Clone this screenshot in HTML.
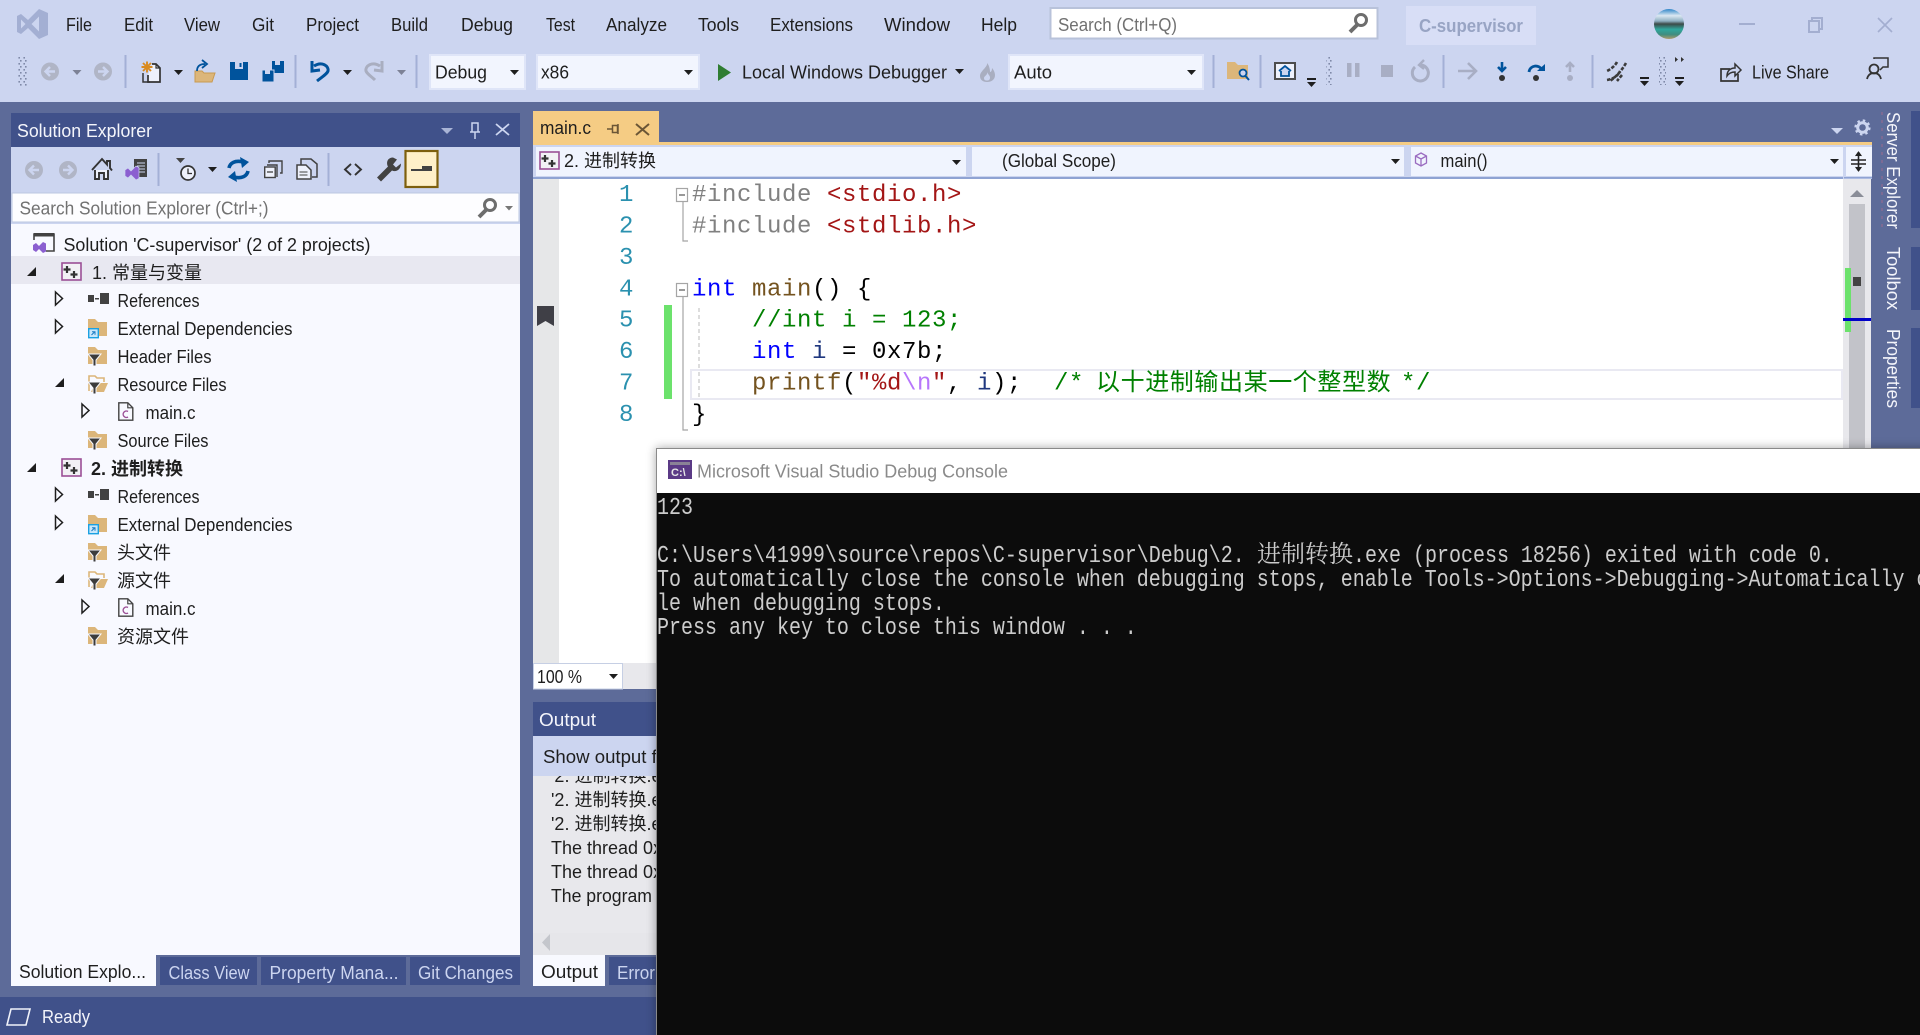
<!DOCTYPE html>
<html lang="en">
<head>
<meta charset="utf-8">
<title>C-supervisor - Microsoft Visual Studio</title>
<style>
html,body{margin:0;padding:0;background:#5d6b99;overflow:hidden}
svg{display:block}
text{font-family:"Liberation Sans","Noto Sans CJK SC",sans-serif;font-size:18px;fill:#1e1e1e;white-space:pre}
.w{fill:#f4f5fb}
.l{fill:#ccd5f0}
.g{fill:#717171}
.m text,text.m,.m{font-family:"Liberation Mono","Noto Sans CJK SC",monospace;font-size:24px;letter-spacing:.6px}
.n{fill:#2b91af}
.c{fill:#008000}
.k{fill:#0000ff}
.f{fill:#74531f}
.s{fill:#a31515}
.v{fill:#1f377f}
.p{fill:#808080}
.b{fill:#000}
.con{font-family:"Liberation Mono",monospace;font-size:20px;fill:#cccccc}
.cjk{font-family:"Noto Sans CJK SC",sans-serif;font-size:24px}
.ccjk{font-family:"Noto Serif CJK SC","Noto Sans CJK SC",serif;font-size:24px;fill:#cccccc}
.sep{fill:#a3b0d6}
.cb{fill:#f2f5fe;stroke:#dfe5f8;stroke-width:2}
</style>
</head>
<body>
<svg xmlns="http://www.w3.org/2000/svg" width="1920" height="1035" viewBox="0 0 1920 1035">
<defs>
<pattern id="grip" width="5" height="6" patternUnits="userSpaceOnUse"><rect width="5" height="6" fill="none"/><rect x="0" y="0" width="1.6" height="1.6" fill="#7f89a8"/><rect x="3.4" y="3" width="1.6" height="1.6" fill="#7f89a8"/></pattern>
<linearGradient id="av" x1="0" y1="0" x2="0" y2="1"><stop offset="0" stop-color="#2f86c8"/><stop offset=".22" stop-color="#dbe8f2"/><stop offset=".4" stop-color="#8fb0c2"/><stop offset=".5" stop-color="#3c4a48"/><stop offset=".68" stop-color="#2fa79d"/><stop offset=".85" stop-color="#3f8d80"/><stop offset="1" stop-color="#b09a6a"/></linearGradient>
<filter id="sh" x="-5%" y="-5%" width="110%" height="110%"><feGaussianBlur stdDeviation="5"/></filter>
<g id="caret"><path d="M0 0h9l-4.500 5z" fill="#1e1e1e"/></g>
<g id="gcaret"><path d="M0 0h9l-4.500 5z" fill="#7d8296"/></g>
<g id="bcaret"><rect x="0" y="0" width="9" height="2" fill="#1e1e1e"/><path d="M0 4h9l-4.500 5z" fill="#1e1e1e"/></g>
<g id="oc"><path d="M0 0l7 6.500-7 6.500z" fill="#f8f9ff" stroke="#1e1e1e" stroke-width="1.500"/></g>
<g id="ec"><path d="M9 0v9h-9z" fill="#1e1e1e"/></g>
<g id="proj"><rect x="1" y="1" width="19" height="17" fill="#f2f1f5" stroke="#9b4f96" stroke-width="1.600"/><path d="M6 4v7M2.500 7.500h7" stroke="#333" stroke-width="2.200"/><path d="M13 9v7M9.500 12.500h7" stroke="#333" stroke-width="2.200"/></g>
<g id="ref"><rect x="0" y="2" width="6" height="7" fill="#424242"/><rect x="7" y="5" width="4" height="1.500" fill="#424242"/><rect x="12" y="0" width="9" height="11" fill="#424242"/></g>
<g id="fold"><path d="M0 1h7l3 3h9v14H0z" fill="#dcb67a"/></g>
<g id="ext"><use href="#fold"/><rect x="0" y="10" width="11" height="10" fill="#f8f9ff"/><rect x=".7" y="10.700" width="9.600" height="9" fill="#c9e7fb" stroke="#1ba1e2" stroke-width="1.400"/><path d="M3.500 17l3-3M4 13.800h3v3" stroke="#1b7cc4" stroke-width="1" fill="none"/></g>
<g id="funnel"><path d="M0 8h13l-5 6v6h-3v-6z" fill="#3c3c3c" stroke="#f8f9ff" stroke-width="1"/></g>
<g id="ff"><use href="#fold"/><use href="#funnel"/></g>
<g id="off"><path d="M1 17V2h6l2 2h7v4" fill="#f8f9ff" stroke="#dcb67a" stroke-width="1.600"/><path d="M3 18l4-9h13l-4 9z" fill="#dcb67a"/><use href="#funnel"/></g>
<g id="cfile"><path d="M.8.800h9l5 5v12.400H.8z" fill="#f8f9ff" stroke="#424242" stroke-width="1.400"/><path d="M9.800.800v5h5" fill="none" stroke="#424242" stroke-width="1.200"/><path d="M10 9.500a3.200 3.200 0 1 0 0 5.500" fill="none" stroke="#9b4f96" stroke-width="1.400"/></g>
<g id="circL"><circle cx="9" cy="9" r="9" fill="#b0b5c6"/><path d="M14 9H5M9 4.500L4.500 9l4.500 4.500" fill="none" stroke="#ccd5f0" stroke-width="2.400"/></g>
<g id="circR"><circle cx="9" cy="9" r="9" fill="#b0b5c6"/><path d="M4 9h9M9 4.500L13.500 9 9 13.500" fill="none" stroke="#ccd5f0" stroke-width="2.400"/></g>
</defs>

<!-- chrome -->
<rect width="1920" height="1035" fill="#5d6b99"/>
<rect width="1920" height="102" fill="#ccd5f0"/>

<!-- logo -->
<path fill-rule="evenodd" fill="#a3afd3" d="M39 9l9 4v22l-9 4-11-11-7 6-4-2V16l4-2 7 6zM21 19.500v9l4.500-4.500zM39 16.500L31.500 24l7.500 7.500z"/>

<!-- menu -->
<text x="66" y="31" textLength="26" lengthAdjust="spacingAndGlyphs">File</text>
<text x="124" y="31" textLength="29" lengthAdjust="spacingAndGlyphs">Edit</text>
<text x="184" y="31" textLength="36" lengthAdjust="spacingAndGlyphs">View</text>
<text x="252" y="31" textLength="22" lengthAdjust="spacingAndGlyphs">Git</text>
<text x="306" y="31" textLength="53" lengthAdjust="spacingAndGlyphs">Project</text>
<text x="391" y="31" textLength="37" lengthAdjust="spacingAndGlyphs">Build</text>
<text x="461" y="31" textLength="52" lengthAdjust="spacingAndGlyphs">Debug</text>
<text x="546" y="31" textLength="29" lengthAdjust="spacingAndGlyphs">Test</text>
<text x="606" y="31" textLength="61" lengthAdjust="spacingAndGlyphs">Analyze</text>
<text x="698" y="31" textLength="41" lengthAdjust="spacingAndGlyphs">Tools</text>
<text x="770" y="31" textLength="83" lengthAdjust="spacingAndGlyphs">Extensions</text>
<text x="884" y="31" textLength="66" lengthAdjust="spacingAndGlyphs">Window</text>
<text x="981" y="31" textLength="36" lengthAdjust="spacingAndGlyphs">Help</text>

<rect x="1050.500" y="8" width="327" height="30.500" fill="#fff" stroke="#b8c2da" stroke-width="2"/>
<text x="1058" y="31" textLength="119" lengthAdjust="spacingAndGlyphs" class="g">Search (Ctrl+Q)</text>
<circle cx="1361" cy="20" r="5.500" fill="none" stroke="#6d6d6d" stroke-width="3"/><path d="M1357 25l-7 7" stroke="#6d6d6d" stroke-width="4"/>
<rect x="1406" y="6" width="130" height="39" fill="#d8def6"/>
<text x="1419" y="32" textLength="104" lengthAdjust="spacingAndGlyphs" style="fill:#98a4c4;font-weight:bold">C-supervisor</text>
<circle cx="1669" cy="24" r="15" fill="url(#av)"/>
<rect x="1739" y="23" width="16" height="2" fill="#a3aed0"/>
<path d="M1812 21v-3h10v11h-3M1809 21h10v11h-10z" fill="none" stroke="#a3aed0" stroke-width="2"/>
<path d="M1878 18l14 14M1892 18l-14 14" stroke="#a3aed0" stroke-width="1.600"/>

<!-- toolbar -->
<rect x="18" y="56" width="10" height="30" fill="url(#grip)"/>
<use href="#circL" x="41" y="62.500"/><use href="#gcaret" x="72.500" y="70"/><use href="#circR" x="94" y="62.500"/>
<rect x="124.500" y="55" width="2" height="33" class="sep"/>
<path d="M152 64h4l4 4v14h-12v-7" fill="#eef1fb" stroke="#333" stroke-width="1.700"/><path d="M143 73v9h7" fill="none" stroke="#333" stroke-width="1.500"/><path d="M156 64v4h4" fill="none" stroke="#333" stroke-width="1.200"/>
<path d="M147 61.500v11M141.500 67h11M143 63l8 8M151 63l-8 8" stroke="#d98a1f" stroke-width="1.900"/>
<use href="#caret" x="174" y="70"/>
<path d="M195 82V71h7l2 2h11l-3 9z" fill="#dcb67a" stroke="#c99a50" stroke-width="1"/>
<path d="M197 71c0-5 3-7 8-7" fill="none" stroke="#00539c" stroke-width="1.800"/><path d="M202 60l5 4-5 4" fill="none" stroke="#00539c" stroke-width="1.800"/>
<path d="M230 62h18v18h-18z" fill="#00539c"/><rect x="235" y="62" width="8" height="7" fill="#ccd5f0"/><rect x="239.500" y="63" width="2" height="4" fill="#00539c"/>
<path d="M272 61h12v12h-12z" fill="#00539c"/><rect x="275" y="61" width="5" height="4" fill="#ccd5f0"/>
<path d="M262 70h12v12h-12z" fill="#00539c" stroke="#ccd5f0" stroke-width="1"/><rect x="265" y="70" width="5" height="4" fill="#ccd5f0"/>
<rect x="294.500" y="55" width="2" height="33" class="sep"/>
<path d="M312 61v10l8-1" fill="none" stroke="#00539c" stroke-width="3"/><path d="M314 66c8-5 15 0 14 5-1 3-6 6-11 10" fill="none" stroke="#00539c" stroke-width="3"/>
<use href="#caret" x="343" y="70"/>
<path d="M382 61v10l-8-1" fill="none" stroke="#a9aec0" stroke-width="3"/><path d="M380 66c-8-5-15 0-14 5 1 3 6 6 9 9" fill="none" stroke="#a9aec0" stroke-width="3"/>
<use href="#gcaret" x="397" y="70"/>
<rect x="415.500" y="55" width="2" height="33" class="sep"/>
<rect x="430" y="55" width="95" height="34" class="cb"/>
<text x="435" y="78.500" textLength="52" lengthAdjust="spacingAndGlyphs">Debug</text><use href="#caret" x="510" y="70"/>
<rect x="537" y="55" width="162" height="34" class="cb"/>
<text x="541" y="78.500" textLength="28" lengthAdjust="spacingAndGlyphs">x86</text><use href="#caret" x="684" y="70"/>
<path d="M718 64l13 8.500-13 8.500z" fill="#2f7d32"/>
<text x="742" y="78.500" textLength="205" lengthAdjust="spacingAndGlyphs">Local Windows Debugger</text><use href="#caret" x="955" y="69"/>
<path fill-rule="evenodd" d="M987 63c1 4-7 8-7 13 0 4 3 6 7 6s8-2 8-7c0-3-2-6-3-7 0 3-1 4-2 4 0-3-1-7-3-9zM987 72c1 3-3 4-3 6 0 2 1 2.500 3 2.500s3-1 3-3c0-2-2-3-3-5.500z" fill="#a9aec0"/>
<rect x="1009" y="55" width="194" height="34" class="cb"/>
<text x="1014" y="78.500" textLength="38" lengthAdjust="spacingAndGlyphs">Auto</text><use href="#caret" x="1187" y="70"/>
<rect x="1212.500" y="55" width="2" height="33" class="sep"/>
<path d="M1227 62h8l3 3h10v14h-21z" fill="#dcb67a"/><circle cx="1243" cy="73" r="3.500" fill="#ccd5f0" stroke="#00539c" stroke-width="1.800"/><path d="M1245.500 76l3.500 4" stroke="#00539c" stroke-width="2"/>
<rect x="1259.500" y="55" width="2" height="33" class="sep"/>
<rect x="1275" y="63" width="20" height="16" fill="#eef1fb" stroke="#4d4d4d" stroke-width="2"/><path d="M1279 71l6-5 6 5M1281 71v5h8v-5" fill="#ccd5f0" stroke="#00539c" stroke-width="1.800"/>
<use href="#bcaret" x="1307" y="78"/>
<rect x="1326" y="56" width="7" height="29" fill="url(#grip)"/>
<rect x="1347" y="63" width="4.500" height="14" fill="#a8aec4"/><rect x="1355" y="63" width="4.500" height="14" fill="#a8aec4"/>
<rect x="1381" y="65" width="12" height="12" fill="#a8aec4"/>
<path d="M1415 67a8 8 0 1 0 6-2" fill="none" stroke="#a8aec4" stroke-width="3"/><path d="M1424 60l-5 5 5 4" fill="none" stroke="#a8aec4" stroke-width="2.400"/>
<rect x="1442.500" y="55" width="2" height="33" class="sep"/>
<path d="M1458 71h18M1468 63l8 8-8 8" fill="none" stroke="#a8aec4" stroke-width="2.600"/>
<path d="M1502 62v9M1498 67l4 4 4-4" fill="none" stroke="#00539c" stroke-width="2.600"/><circle cx="1502" cy="78" r="3" fill="#333"/>
<path d="M1529 72c1-7 10-8 13-2" fill="none" stroke="#00539c" stroke-width="2.800"/><path d="M1537 71h8v-7z" fill="#00539c"/><circle cx="1536" cy="78" r="3" fill="#333"/>
<path d="M1570 72v-9M1566 67l4-4 4 4" fill="none" stroke="#a8aec4" stroke-width="2.600"/><circle cx="1570" cy="78" r="3" fill="#a8aec4"/>
<rect x="1591.500" y="55" width="2" height="33" class="sep"/>
<path d="M1617 62c-2 4-6 7-10 9M1626 63c-4 7-9 13-16 18M1607 80c6-1 11-4 13-9M1622 75l-5 6" fill="none" stroke="#3c3c3c" stroke-width="2.600" stroke-dasharray="3.500 1.500"/>
<use href="#bcaret" x="1640" y="77"/>
<rect x="1659" y="56" width="7" height="29" fill="url(#grip)"/>
<path d="M1675 57l3 2.500-3 2.500zM1681 57l3 2.500-3 2.500z" fill="#333"/>
<use href="#bcaret" x="1675" y="77"/>
<path d="M1730 69h-9v12h17v-7" fill="none" stroke="#333" stroke-width="1.700"/><path d="M1727 76c0-5 3-8 8-8v-4l6 6-6 6v-4c-3 0-6 1-8 4z" fill="#ccd5f0" stroke="#333" stroke-width="1.500"/>
<text x="1752" y="78.500" textLength="77" lengthAdjust="spacingAndGlyphs">Live Share</text>
<circle cx="1874" cy="69" r="4.500" fill="none" stroke="#333" stroke-width="1.800"/><path d="M1867 79c1-4 3-6 7-6s6 2 7 6" fill="none" stroke="#333" stroke-width="1.800"/><path d="M1874 59v-1h14v9h-5l-3 3" fill="none" stroke="#333" stroke-width="1.500"/>

<!-- solution explorer -->
<rect x="11" y="113" width="509" height="34" fill="#40518a"/>
<text x="17" y="137" textLength="135" lengthAdjust="spacingAndGlyphs" class="w">Solution Explorer</text>
<path d="M441 128h12l-6 6z" fill="#a9b4d6"/>
<path d="M472 123h6v9h-6zM470 132h10M475 132v7" fill="none" stroke="#ccd5f0" stroke-width="1.500"/>
<path d="M496 124l13 11M509 124l-13 11" stroke="#ccd5f0" stroke-width="1.800"/>
<rect x="11" y="147" width="509" height="44" fill="#ccd5f0"/>
<use href="#circL" x="25" y="161"/><use href="#circR" x="59" y="161"/>
<path d="M92 170l10-11 5 5.500v-3.500h3v7l2 2.500" fill="none" stroke="#333" stroke-width="1.900"/><path d="M95 170v9h4v-6h5v6h4v-9" fill="#eef1fb" stroke="#333" stroke-width="1.900"/>
<rect x="134" y="159" width="13" height="18" fill="#424242"/><path d="M137 163h8M137 166h8M137 169h8M137 172h8" stroke="#ccd5f0" stroke-width="1"/>
<path d="M125 170l3-2 3 3 5-5 3 1.500v11l-3 1.500-5-5-3 3-3-2z" fill="#8b5fd0" stroke="#ccd5f0" stroke-width=".7"/>
<rect x="157.500" y="153" width="2" height="33" class="sep"/>
<path d="M176 158h9l-4.500 5z" fill="#444"/><circle cx="188" cy="173" r="7" fill="#eef1fb" stroke="#333" stroke-width="1.700"/><path d="M188 168.500v5h4" fill="none" stroke="#333" stroke-width="1.300"/>
<use href="#caret" x="208" y="167"/>
<path d="M229 168c1-5 6-8 14-6" fill="none" stroke="#00539c" stroke-width="3.600"/><path d="M240 157l9 5-7 6z" fill="#00539c"/><path d="M248 171c-1 5-6 8-14 6" fill="none" stroke="#00539c" stroke-width="3.600"/><path d="M237 182l-9-5 7-6z" fill="#00539c"/>
<path d="M269 163v-2h13v12h-2" fill="none" stroke="#424242" stroke-width="1.400"/><path d="M267 165h10v12" fill="none" stroke="#424242" stroke-width="1.400"/><rect x="264.700" y="167" width="10.500" height="10.500" fill="#eef1fb" stroke="#424242" stroke-width="1.400"/><path d="M267 172h6" stroke="#424242" stroke-width="1.300"/>
<path d="M301 168v-9h10l6 5v13h-5" fill="none" stroke="#424242" stroke-width="1.500"/><path d="M297 165h9l5 5v9h-14z" fill="#eef1fb" stroke="#424242" stroke-width="1.500"/><path d="M299.500 172h8M299.500 175h8" stroke="#424242" stroke-width="1.100"/>
<rect x="327.500" y="153" width="2" height="33" class="sep"/>
<path d="M351 164l-6 5.500 6 5.500M355 164l6 5.500-6 5.500" fill="none" stroke="#333" stroke-width="1.900"/>
<path d="M394 158c-6 0-7 6-5 9l-11 11 4 4 11-11c4 2 9-1 9-7l-5 4-3-3 4-5z" fill="#424242" transform="translate(-1 -.500)"/>
<rect x="405.500" y="151" width="32" height="36" fill="#fff0c8" stroke="#7d5f0d" stroke-width="2.200"/><path d="M411 171h21v-5h-10v3h-11z" fill="#424242"/>
<rect x="11" y="191" width="509" height="33" fill="#ccd5f0"/>
<rect x="12" y="193" width="507" height="29" fill="#fdfdff" stroke="#bcc6e0" stroke-width="1"/>
<text x="19.500" y="214.500" textLength="249" lengthAdjust="spacingAndGlyphs" class="g">Search Solution Explorer (Ctrl+;)</text>
<circle cx="490" cy="205" r="5.500" fill="none" stroke="#6d6d6d" stroke-width="3"/><path d="M486 210l-7 7" stroke="#6d6d6d" stroke-width="4"/>
<path d="M505 206h8l-4 4.500z" fill="#777"/>
<rect x="11" y="224" width="509" height="731" fill="#f8f9ff"/>
<rect x="11" y="256" width="509" height="28" fill="#e8e8f1"/>

<!-- tree -->
<path d="M34 240v-6h20v17h-8" fill="none" stroke="#424242" stroke-width="1.600"/><rect x="34" y="233" width="20" height="3.500" fill="#424242"/>
<path d="M33 245l3-2 3 3 4-4 3 1.500v8l-3 1.500-4-4-3 3-3-2z" fill="#8b5fd0"/>
<text x="63.500" y="251" textLength="307" lengthAdjust="spacingAndGlyphs">Solution 'C-supervisor' (2 of 2 projects)</text>
<use href="#ec" x="27" y="267"/><use href="#proj" x="61" y="262"/>
<text x="92" y="279">1. 常量与变量</text>
<use href="#oc" x="55.500" y="292"/><use href="#ref" x="88" y="293"/><text x="117.500" y="307" textLength="82" lengthAdjust="spacingAndGlyphs">References</text>
<use href="#oc" x="55.500" y="320"/><use href="#ext" x="88" y="318"/><text x="117.500" y="335" textLength="175" lengthAdjust="spacingAndGlyphs">External Dependencies</text>
<use href="#ff" x="88" y="346"/><text x="117.500" y="363" textLength="94" lengthAdjust="spacingAndGlyphs">Header Files</text>
<use href="#ec" x="55" y="378"/><use href="#off" x="88" y="374"/><text x="117.500" y="391" textLength="109" lengthAdjust="spacingAndGlyphs">Resource Files</text>
<use href="#oc" x="82" y="404"/><use href="#cfile" x="118" y="402"/><text x="145.500" y="419" textLength="50" lengthAdjust="spacingAndGlyphs">main.c</text>
<use href="#ff" x="88" y="430"/><text x="117.500" y="447" textLength="91" lengthAdjust="spacingAndGlyphs">Source Files</text>
<use href="#ec" x="27" y="463"/><use href="#proj" x="61" y="458"/>
<text x="91" y="475" style="font-weight:bold">2. 进制转换</text>
<use href="#oc" x="55.500" y="488"/><use href="#ref" x="88" y="489"/><text x="117.500" y="503" textLength="82" lengthAdjust="spacingAndGlyphs">References</text>
<use href="#oc" x="55.500" y="516"/><use href="#ext" x="88" y="514"/><text x="117.500" y="531" textLength="175" lengthAdjust="spacingAndGlyphs">External Dependencies</text>
<use href="#ff" x="88" y="542"/><text x="117" y="559">头文件</text>
<use href="#ec" x="55" y="574"/><use href="#off" x="88" y="570"/><text x="117" y="587">源文件</text>
<use href="#oc" x="82" y="600"/><use href="#cfile" x="118" y="598"/><text x="145.500" y="615" textLength="50" lengthAdjust="spacingAndGlyphs">main.c</text>
<use href="#ff" x="88" y="626"/><text x="117" y="643">资源文件</text>

<!-- left tabs -->
<rect x="11" y="955" width="145" height="31" fill="#f8f9ff"/>
<text x="19" y="978" textLength="127" lengthAdjust="spacingAndGlyphs">Solution Explo...</text>
<rect x="160" y="957" width="97" height="28" fill="#40518a"/><text x="168.500" y="979" textLength="81" lengthAdjust="spacingAndGlyphs" class="l">Class View</text>
<rect x="261" y="957" width="145" height="28" fill="#40518a"/><text x="269.500" y="979" textLength="129" lengthAdjust="spacingAndGlyphs" class="l">Property Mana...</text>
<rect x="410" y="957" width="110" height="28" fill="#40518a"/><text x="418" y="979" textLength="95" lengthAdjust="spacingAndGlyphs" class="l">Git Changes</text>

<!-- editor tabs -->
<rect x="533" y="111" width="126" height="31" fill="#f5cc84"/>
<rect x="533" y="142" width="1339" height="3" fill="#f5cc84"/>
<text x="540" y="134" textLength="51" lengthAdjust="spacingAndGlyphs">main.c</text>
<path d="M607 129h5M612.500 125.500h5v7h-5zM618 124v10" fill="none" stroke="#6b5636" stroke-width="1.500"/>
<path d="M636 124l13 11M649 124l-13 11" stroke="#6b5636" stroke-width="2"/>
<path d="M1831 128h12l-6 6z" fill="#ccd5f0"/>
<circle cx="1862.500" cy="127.500" r="4.800" fill="none" stroke="#ccd5f0" stroke-width="3"/><circle cx="1862.500" cy="127.500" r="7" fill="none" stroke="#ccd5f0" stroke-width="2.200" stroke-dasharray="2.500 3"/>

<!-- nav bar -->
<rect x="533" y="145" width="1339" height="34" fill="#ccd5f0"/>
<rect x="536" y="147" width="430" height="29" fill="#f0f4fe"/><rect x="972" y="147" width="432" height="29" fill="#f0f4fe"/><rect x="1411" y="147" width="432" height="29" fill="#f0f4fe"/><rect x="1846" y="147" width="26" height="29" fill="#f0f4fe"/>
<rect x="533" y="177" width="1310" height="2.500" fill="#8fa3d3"/><rect x="1844" y="177" width="28" height="1.500" fill="#8fa3d3"/>
<use href="#proj" x="539" y="151"/>
<text x="564" y="167">2. 进制转换</text>
<use href="#caret" x="952" y="160"/>
<text x="1002" y="167" textLength="114" lengthAdjust="spacingAndGlyphs">(Global Scope)</text><use href="#caret" x="1391" y="159"/>
<path d="M1421 153l5.500 3v7l-5.500 3-5.500-3v-7zM1415.500 156l5.500 3 5.500-3M1421 159v7" fill="none" stroke="#9a6cc0" stroke-width="1.300"/>
<text x="1440.500" y="167" textLength="47" lengthAdjust="spacingAndGlyphs">main()</text><use href="#caret" x="1830" y="159"/>
<path d="M1851 160h15M1851 164h15M1858.500 152v19" stroke="#222" stroke-width="1.600"/><path d="M1855.500 156l3-4 3 4M1855.500 167l3 4 3-4" fill="#222" stroke="#222" stroke-width="1"/>

<!-- editor -->
<rect x="533" y="179" width="26" height="484" fill="#e6e7e8"/>
<rect x="559" y="179" width="1284" height="484" fill="#fff"/>
<rect x="1843" y="179" width="28" height="276" fill="#e8e8ec"/>
<path d="M1850 197l7-7 7 7z" fill="#8a8d98"/>
<rect x="1849" y="204" width="16" height="250" fill="#c2c3c9"/>
<rect x="1845" y="268" width="6" height="64" fill="#6ce26c"/>
<rect x="1853" y="277" width="8" height="9" fill="#424242"/>
<rect x="1843" y="318" width="28" height="3" fill="#0000c8"/>
<path d="M537 306h17v20l-8.500-5-8.500 5z" fill="#3f3f46"/>
<rect x="664" y="305" width="8" height="94" fill="#6ce26c"/>
<rect x="691" y="370" width="1151" height="29" fill="none" stroke="#e9e9f2" stroke-width="2"/>
<g fill="none" stroke="#a5a5a5" stroke-width="1.200"><rect x="676.500" y="188.500" width="11" height="13" fill="#fff"/><path d="M679 195h6" stroke="#555"/><path d="M683 202v39h5"/><rect x="676.500" y="283.500" width="11" height="13" fill="#fff"/><path d="M679 290h6" stroke="#555"/><path d="M683 297v133h5"/></g>
<path d="M699 308v62" stroke="#bbb" stroke-width="1" stroke-dasharray="4 3"/><path d="M699 372v26" stroke="#bbb" stroke-width="1" stroke-dasharray="4 3"/>

<g class="m">
<text class="m n" x="619" y="201">1</text>
<text class="m n" x="619" y="232.400">2</text>
<text class="m n" x="619" y="263.900">3</text>
<text class="m n" x="619" y="295.300">4</text>
<text class="m n" x="619" y="326.700">5</text>
<text class="m n" x="619" y="358.100">6</text>
<text class="m n" x="619" y="389.600">7</text>
<text class="m n" x="619" y="421">8</text>

<text class="m p" x="692" y="201">#include</text><text class="m s" x="827" y="201">&lt;stdio.h&gt;</text>
<text class="m p" x="692" y="232.400">#include</text><text class="m s" x="827" y="232.400">&lt;stdlib.h&gt;</text>
<text class="m k" x="692" y="295.300">int</text><text class="m f" x="752" y="295.300">main</text><text class="m b" x="812" y="295.300">()</text><text class="m b" x="857" y="295.300">{</text>
<text class="m c" x="752" y="326.700">//int i = 123;</text>
<text class="m k" x="752" y="358.100">int</text><text class="m v" x="812" y="358.100">i</text><text class="m b" x="842" y="358.100">= 0x7b;</text>
<text class="m f" x="752" y="389.600">printf</text><text class="m b" x="842" y="389.600">(</text><text class="m s" x="857" y="389.600">"%d</text><text class="m" style="fill:#b776fb" x="902" y="389.600">\n</text><text class="m s" x="932" y="389.600">"</text><text class="m b" x="947" y="389.600">,</text><text class="m v" x="977" y="389.600">i</text><text class="m b" x="992" y="389.600">);</text>
<text class="m c" x="1054" y="389.600">/*</text><text class="cjk c" x="1096" y="390">以十进制输出某一个整型数</text><text class="m c" x="1401" y="389.600">*/</text>
<text class="m b" x="692" y="421">}</text>
</g>

<!-- zoom bar -->
<rect x="533" y="663" width="130" height="26" fill="#e8e8ec"/>
<rect x="533.500" y="663.500" width="89" height="25.500" fill="#fff" stroke="#c6cfe4" stroke-width="1"/>
<text x="537" y="683" textLength="45" lengthAdjust="spacingAndGlyphs">100 %</text><use href="#caret" x="609" y="674"/>

<!-- output -->
<rect x="533" y="702" width="130" height="34" fill="#40518a"/>
<text x="539" y="726" textLength="57" lengthAdjust="spacingAndGlyphs" class="w">Output</text>
<rect x="533" y="736" width="130" height="40" fill="#ccd5f0"/>
<rect x="533" y="776" width="130" height="179" fill="#e8e8ec"/>
<svg x="533" y="776" width="130" height="179" viewBox="533 776 130 179">
<text x="551" y="782">'2. 进制转换.exe'</text>
<text x="551" y="806">'2. 进制转换.exe'</text>
<text x="551" y="830">'2. 进制转换.exe'</text>
<text x="551" y="854">The thread 0x</text>
<text x="551" y="878">The thread 0x</text>
<text x="551" y="902" textLength="101" lengthAdjust="spacingAndGlyphs">The program</text>
<rect x="533" y="933" width="130" height="22" fill="#e6e6ea"/>
<path d="M550 934v17l-8-8.500z" fill="#c4c6cc"/>
</svg>
<text x="543" y="763" textLength="120" lengthAdjust="spacingAndGlyphs">Show output fr</text>
<rect x="533" y="955" width="72" height="31" fill="#f8f9ff"/><text x="541" y="978" textLength="57" lengthAdjust="spacingAndGlyphs">Output</text>
<rect x="609" y="957" width="54" height="28" fill="#40518a"/><text x="617" y="979" textLength="38" lengthAdjust="spacingAndGlyphs" class="l">Error</text>

<!-- right rail -->
<rect x="1872" y="102" width="48" height="346" fill="#5d6b99"/>
<rect x="1911" y="111" width="9" height="117" fill="#40518a"/>
<rect x="1911" y="247" width="9" height="63" fill="#40518a"/>
<rect x="1911" y="328" width="9" height="80" fill="#40518a"/>
<path d="M1882 112v116" stroke="#9a6b90" stroke-width="1" stroke-dasharray="3 5"/>
<text class="w" transform="translate(1887 112) rotate(90)" textLength="117" lengthAdjust="spacingAndGlyphs">Server Explorer</text>
<text class="w" transform="translate(1887 247) rotate(90)" textLength="63" lengthAdjust="spacingAndGlyphs">Toolbox</text>
<text class="w" transform="translate(1887 329) rotate(90)" textLength="79" lengthAdjust="spacingAndGlyphs">Properties</text>

<!-- status bar -->
<rect x="0" y="997" width="1920" height="38" fill="#40518a"/>
<path d="M11 1009h19l-4 16H7z" fill="none" stroke="#f0f2fa" stroke-width="1.600"/>
<text x="42" y="1023" textLength="48" lengthAdjust="spacingAndGlyphs" class="w">Ready</text>

<!-- console window -->
<rect x="656" y="448" width="1300" height="620" fill="#000" opacity=".35" filter="url(#sh)"/>
<rect x="656.500" y="448.500" width="1270" height="600" fill="#fff" stroke="#8a8a8a" stroke-width="1"/>
<rect x="657" y="493" width="1263" height="542" fill="#0c0c0c"/>
<rect x="668" y="460" width="24" height="19" fill="#5b3a86"/><rect x="670" y="462" width="20" height="3" fill="#8a8296"/>
<text x="671" y="476" style="font-size:11px;fill:#e8e8e8;font-weight:bold">C:\</text>
<text x="697" y="477.500" textLength="311" lengthAdjust="spacingAndGlyphs" style="fill:#8a8a8a">Microsoft Visual Studio Debug Console</text>
<text class="con" transform="translate(657 514) scale(1 1.200)">123</text>
<text class="con" transform="translate(657 562) scale(1 1.200)">C:\Users\41999\source\repos\C-supervisor\Debug\2.</text>
<text class="ccjk" x="1257" y="562">进制转换</text>
<text class="con" transform="translate(1353 562) scale(1 1.200)">.exe (process 18256) exited with code 0.</text>
<text class="con" transform="translate(657 586) scale(1 1.200)">To automatically close the console when debugging stops, enable Tools-&gt;Options-&gt;Debugging-&gt;Automatically c</text>
<text class="con" transform="translate(657 610) scale(1 1.200)">le when debugging stops.</text>
<text class="con" transform="translate(657 634) scale(1 1.200)">Press any key to close this window . . .</text>
</svg>
</body>
</html>
